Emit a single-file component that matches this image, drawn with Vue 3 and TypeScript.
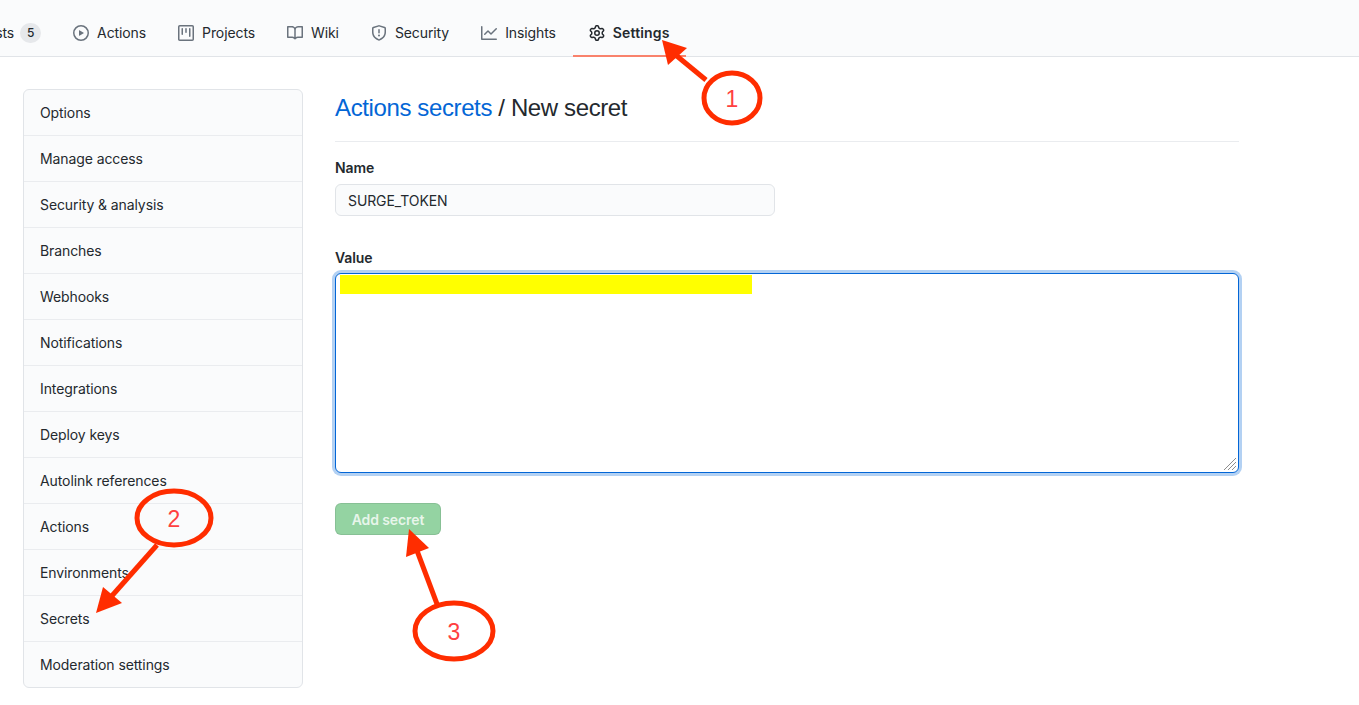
<script setup lang="ts">
interface Tab { label: string; icon: string; current?: boolean }

const tabs: Tab[] = [
  { label: 'Actions', icon: 'M1.5 8a6.5 6.5 0 1113 0 6.5 6.5 0 01-13 0zM8 0a8 8 0 100 16A8 8 0 008 0zM6.379 5.227A.25.25 0 006 5.442v5.117a.25.25 0 00.379.214l4.264-2.559a.25.25 0 000-.428L6.379 5.227z' },
  { label: 'Projects', icon: 'M1.75 0A1.75 1.75 0 000 1.75v12.5C0 15.216.784 16 1.75 16h12.5A1.75 1.75 0 0016 14.25V1.75A1.75 1.75 0 0014.25 0H1.75zM1.5 1.75a.25.25 0 01.25-.25h12.5a.25.25 0 01.25.25v12.5a.25.25 0 01-.25.25H1.75a.25.25 0 01-.25-.25V1.75zM11.75 3a.75.75 0 00-.75.75v7.5a.75.75 0 001.5 0v-7.5a.75.75 0 00-.75-.75zm-8.25.75a.75.75 0 011.5 0v5.5a.75.75 0 01-1.5 0v-5.5zM8 3a.75.75 0 00-.75.75v3.5a.75.75 0 001.5 0v-3.5A.75.75 0 008 3z' },
  { label: 'Wiki', icon: 'M0 1.75A.75.75 0 01.75 1h4.253c1.227 0 2.317.59 3 1.501A3.744 3.744 0 0111.006 1h4.245a.75.75 0 01.75.75v10.5a.75.75 0 01-.75.75h-4.507a2.25 2.25 0 00-1.591.659l-.622.621a.75.75 0 01-1.06 0l-.622-.621A2.25 2.25 0 005.258 13H.75a.75.75 0 01-.75-.75V1.75zm8.755 3a2.25 2.25 0 012.25-2.25H14.5v9h-3.757c-.71 0-1.4.201-1.992.572l.004-7.322zm-1.504 7.324l.004-5.073-.002-2.253A2.25 2.25 0 005.003 2.5H1.5v9h3.757a3.75 3.75 0 011.994.574z' },
  { label: 'Security', icon: 'M7.467.133a1.75 1.75 0 011.066 0l5.25 1.68A1.75 1.75 0 0115 3.48V7c0 1.566-.32 3.182-1.303 4.682-.983 1.498-2.585 2.813-5.032 3.855a1.7 1.7 0 01-1.33 0c-2.447-1.042-4.049-2.357-5.032-3.855C1.32 10.182 1 8.566 1 7V3.48a1.75 1.75 0 011.217-1.667l5.25-1.68zm.61 1.429a.25.25 0 00-.153 0l-5.25 1.68a.25.25 0 00-.174.238V7c0 1.358.275 2.666 1.057 3.86.784 1.194 2.121 2.34 4.366 3.297a.2.2 0 00.154 0c2.245-.956 3.582-2.104 4.366-3.298C13.225 9.666 13.5 8.36 13.5 7V3.48a.25.25 0 00-.174-.237l-5.25-1.68zM9 10.5a1 1 0 11-2 0 1 1 0 012 0zm-.25-5.75a.75.75 0 10-1.5 0v3a.75.75 0 001.5 0v-3z' },
  { label: 'Insights', icon: 'M1.5 1.75a.75.75 0 00-1.5 0v12.5c0 .414.336.75.75.75h14.5a.75.75 0 000-1.5H1.5V1.75zm14.28 2.53a.75.75 0 00-1.06-1.06L10 7.94 7.53 5.47a.75.75 0 00-1.06 0L3.22 8.72a.75.75 0 001.06 1.06L7 7.06l2.47 2.47a.75.75 0 001.06 0l5.25-5.25z' },
  { label: 'Settings', current: true, icon: 'M7.429 1.525a6.593 6.593 0 011.142 0c.036.003.108.036.137.146l.289 1.105c.147.56.55.967.997 1.189.174.086.341.183.501.29.417.278.97.423 1.53.27l1.102-.303c.11-.03.175.016.195.046.219.31.41.641.573.989.014.031.022.11-.059.19l-.815.806c-.411.406-.562.957-.53 1.456a4.588 4.588 0 010 .582c-.032.499.119 1.05.53 1.456l.815.806c.08.08.073.159.059.19a6.494 6.494 0 01-.573.99c-.02.029-.086.074-.195.045l-1.103-.303c-.559-.153-1.112-.008-1.529.27-.16.107-.327.204-.5.29-.449.222-.851.628-.998 1.189l-.289 1.105c-.029.11-.101.143-.137.146a6.613 6.613 0 01-1.142 0c-.036-.003-.108-.037-.137-.146l-.289-1.105c-.147-.56-.55-.967-.997-1.189a4.502 4.502 0 01-.501-.29c-.417-.278-.97-.423-1.53-.27l-1.102.303c-.11.03-.175-.016-.195-.046a6.492 6.492 0 01-.573-.989c-.014-.031-.022-.11.059-.19l.815-.806c.411-.406.562-.957.53-1.456a4.587 4.587 0 010-.582c.032-.499-.119-1.05-.53-1.456l-.815-.806c-.08-.08-.073-.159-.059-.19a6.44 6.44 0 01.573-.99c.02-.029.086-.075.195-.045l1.103.303c.559.153 1.112.008 1.529-.27.16-.107.327-.204.5-.29.449-.222.851-.628.998-1.189l.289-1.105c.029-.11.101-.143.137-.146zM8 0c-.236 0-.47.01-.701.03-.743.065-1.29.615-1.458 1.261l-.29 1.106c-.017.066-.078.158-.211.224a5.994 5.994 0 00-.668.386c-.123.082-.233.09-.3.071L3.27 2.776c-.644-.177-1.392.02-1.82.63a7.977 7.977 0 00-.704 1.217c-.315.675-.111 1.422.363 1.891l.815.806c.05.048.098.147.088.294a6.084 6.084 0 000 .772c.01.147-.038.246-.088.294l-.815.806c-.474.469-.678 1.216-.363 1.891.2.428.436.835.704 1.218.428.609 1.176.806 1.82.63l1.103-.303c.066-.019.176-.011.299.071.213.143.436.272.668.386.133.066.194.158.212.224l.289 1.106c.169.646.715 1.196 1.458 1.26a8.094 8.094 0 001.402 0c.743-.064 1.29-.614 1.458-1.26l.29-1.106c.017-.066.078-.158.211-.224a5.98 5.98 0 00.668-.386c.123-.082.233-.09.3-.071l1.102.302c.644.177 1.392-.02 1.82-.63.268-.382.505-.789.704-1.217.315-.675.111-1.422-.364-1.891l-.814-.806c-.05-.048-.098-.147-.088-.294a6.1 6.1 0 000-.772c-.01-.147.039-.246.088-.294l.814-.806c.475-.469.679-1.216.364-1.891a7.992 7.992 0 00-.704-1.218c-.428-.609-1.176-.806-1.82-.63l-1.103.303c-.066.019-.176.011-.299-.071a5.991 5.991 0 00-.668-.386c-.133-.066-.194-.158-.212-.224L10.16 1.29C9.99.645 9.444.095 8.701.031A8.094 8.094 0 008 0zm1.5 8a1.5 1.5 0 11-3 0 1.5 1.5 0 013 0zM11 8a3 3 0 11-6 0 3 3 0 016 0z' },
]

const menu: string[] = [
  'Options', 'Manage access', 'Security & analysis', 'Branches', 'Webhooks',
  'Notifications', 'Integrations', 'Deploy keys', 'Autolink references',
  'Actions', 'Environments', 'Secrets', 'Moderation settings',
]

interface Callout { n: string; cx: number; cy: number; rx: number; ry: number; line: number[]; head: string }

const callouts: Callout[] = [
  { n: '1', cx: 732, cy: 98, rx: 28, ry: 25, line: [706, 80, 672, 52], head: '662,40 687,48 668,65' },
  { n: '2', cx: 174, cy: 518, rx: 37, ry: 27, line: [157, 545, 110, 598], head: '96,613 103,587 122,603' },
  { n: '3', cx: 454, cy: 631, rx: 39, ry: 28, line: [437, 604, 416, 548], head: '409,529 429,548 406,557' },
]
</script>

<template>
  <div class="page">
    <nav class="repo-nav">
      <ul class="tabs">
        <li class="tab tab-first">
          <span>Pull requests</span>
          <span class="counter">5</span>
        </li>
        <li v-for="t in tabs" :key="t.label" class="tab" :class="{ current: t.current }">
          <svg class="icon" viewBox="0 0 16 16" width="16" height="16" aria-hidden="true">
            <path fill-rule="evenodd" :d="t.icon" />
          </svg>
          <span>{{ t.label }}</span>
        </li>
      </ul>
    </nav>

    <main class="layout">
      <ul class="menu">
        <li v-for="m in menu" :key="m" class="menu-item">{{ m }}</li>
      </ul>

      <section class="content">
        <h2 class="subhead"><a class="link">Actions secrets</a> / New secret</h2>

        <label class="label" for="secret-name">Name</label>
        <input id="secret-name" class="name-input" type="text" value="SURGE_TOKEN" readonly />

        <label class="label label-value" for="secret-value">Value</label>
        <div class="value-wrap">
          <textarea id="secret-value" class="value-input" readonly></textarea>
          <div class="redaction"></div>
          <svg class="grip" viewBox="0 0 14 14" width="14" height="14" aria-hidden="true">
            <path d="M1 13L13 1M5 13L13 5M9 13L13 9" />
          </svg>
        </div>

        <button class="submit" type="button">Add secret</button>
      </section>
    </main>

    <svg class="annotations" viewBox="0 0 1359 705" width="1359" height="705" aria-hidden="false">
      <g v-for="c in callouts" :key="c.n">
        <line :x1="c.line[0]" :y1="c.line[1]" :x2="c.line[2]" :y2="c.line[3]" class="arrow-line" />
        <polygon :points="c.head" class="arrow-head" />
        <ellipse :cx="c.cx" :cy="c.cy" :rx="c.rx" :ry="c.ry" class="ring" />
        <text :x="c.cx" :y="c.cy + 9" text-anchor="middle" class="num">{{ c.n }}</text>
      </g>
    </svg>
  </div>
</template>

<style>
html, body { margin: 0; background: #fff; }
</style>

<style scoped>
.page {
  position: relative;
  width: 1359px;
  height: 705px;
  overflow: hidden;
  background: #fff;
  color: #24292e;
  font-family: Inter, "Liberation Sans", sans-serif;
  font-size: 14px;
  line-height: 21px;
  letter-spacing: -0.1px;
}
.repo-nav {
  height: 57px;
  background: #fafbfc;
  box-shadow: inset 0 -1px 0 #e1e4e8;
  overflow: hidden;
}
.tabs {
  display: flex;
  list-style: none;
  margin: 0 0 0 -86px;
  padding: 0;
  width: max-content;
}
.tab {
  display: flex;
  align-items: center;
  gap: 8px;
  height: 57px;
  padding: 10px 16px 0;
  box-sizing: border-box;
  white-space: nowrap;
  border-bottom: 2px solid transparent;
}
.tab-first { gap: 6px; }
.icon { fill: #6a737d; flex: none; }
.counter {
  display: inline-block;
  min-width: 21px;
  height: 20px;
  line-height: 20px;
  border-radius: 10px;
  background: #e6e8eb;
  font-size: 12px;
  font-weight: 500;
  text-align: center;
}
.current {
  margin-left: 1px;
  font-weight: 600;
  letter-spacing: 0.15px;
  border-bottom-color: #f9826c;
}
.current .icon { fill: #24292e; }
.layout {
  display: flex;
  align-items: flex-start;
  gap: 32px;
  padding: 32px 0 0 23px;
}
.menu {
  width: 280px;
  box-sizing: border-box;
  list-style: none;
  margin: 0;
  padding: 0;
  background: #fafbfc;
  border: 1px solid #e1e4e8;
  border-radius: 6px;
  flex: none;
}
.menu-item {
  height: 46px;
  box-sizing: border-box;
  padding: 12px 16px 0;
  border-bottom: 1px solid #eaecef;
}
.menu-item:last-child { height: 45px; border-bottom: 0; }
.content { width: 904px; flex: none; }
.subhead {
  margin: 0 0 15px;
  padding: 1px 0 15px;
  border-bottom: 1px solid #eaecef;
  font-family: "Liberation Sans", Arial, sans-serif;
  font-size: 24px;
  font-weight: 400;
  line-height: 36px;
  letter-spacing: -0.38px;
}
.link { color: #0366d6; }
.label {
  display: block;
  font-weight: 600;
  margin-bottom: 6px;
}
.label-value { margin-top: 31px; margin-bottom: 5px; }
.name-input {
  display: block;
  width: 440px;
  height: 32px;
  box-sizing: border-box;
  padding: 5px 12px;
  background: #fafbfc;
  border: 1px solid #e1e4e8;
  border-radius: 6px;
  color: #24292e;
  font: inherit;
  letter-spacing: inherit;
  outline: none;
}
.value-wrap { position: relative; height: 200px; }
.value-input {
  display: block;
  width: 904px;
  height: 200px;
  box-sizing: border-box;
  margin: 0;
  padding: 5px 12px;
  background: #fff;
  border: 1px solid #0366d6;
  border-radius: 6px;
  box-shadow: 0 0 0 3px rgba(3, 102, 214, 0.3);
  outline: none;
  resize: none;
  font: inherit;
}
.redaction {
  position: absolute;
  left: 5px;
  top: 2px;
  width: 412px;
  height: 19px;
  background: #ffff00;
}
.grip {
  position: absolute;
  right: 2px;
  bottom: 2px;
  fill: none;
  stroke: #8d8d8d;
  stroke-width: 1;
}
.submit {
  display: block;
  width: 106px;
  height: 32px;
  margin-top: 30px;
  padding: 0;
  background: #94d3a2;
  border: 1px solid rgba(27, 31, 35, 0.1);
  border-radius: 6px;
  color: rgba(255, 255, 255, 0.8);
  font: inherit;
  font-weight: 600;
  letter-spacing: inherit;
}
.annotations {
  position: absolute;
  left: 0;
  top: 0;
  pointer-events: none;
}
.arrow-line { stroke: #ff2d00; stroke-width: 5; }
.arrow-head { fill: #ff2d00; }
.ring { fill: none; stroke: #ff2d00; stroke-width: 5; }
.num {
  fill: #ff4040;
  font-family: "Liberation Sans", sans-serif;
  font-size: 23px;
  letter-spacing: 0;
}
</style>
